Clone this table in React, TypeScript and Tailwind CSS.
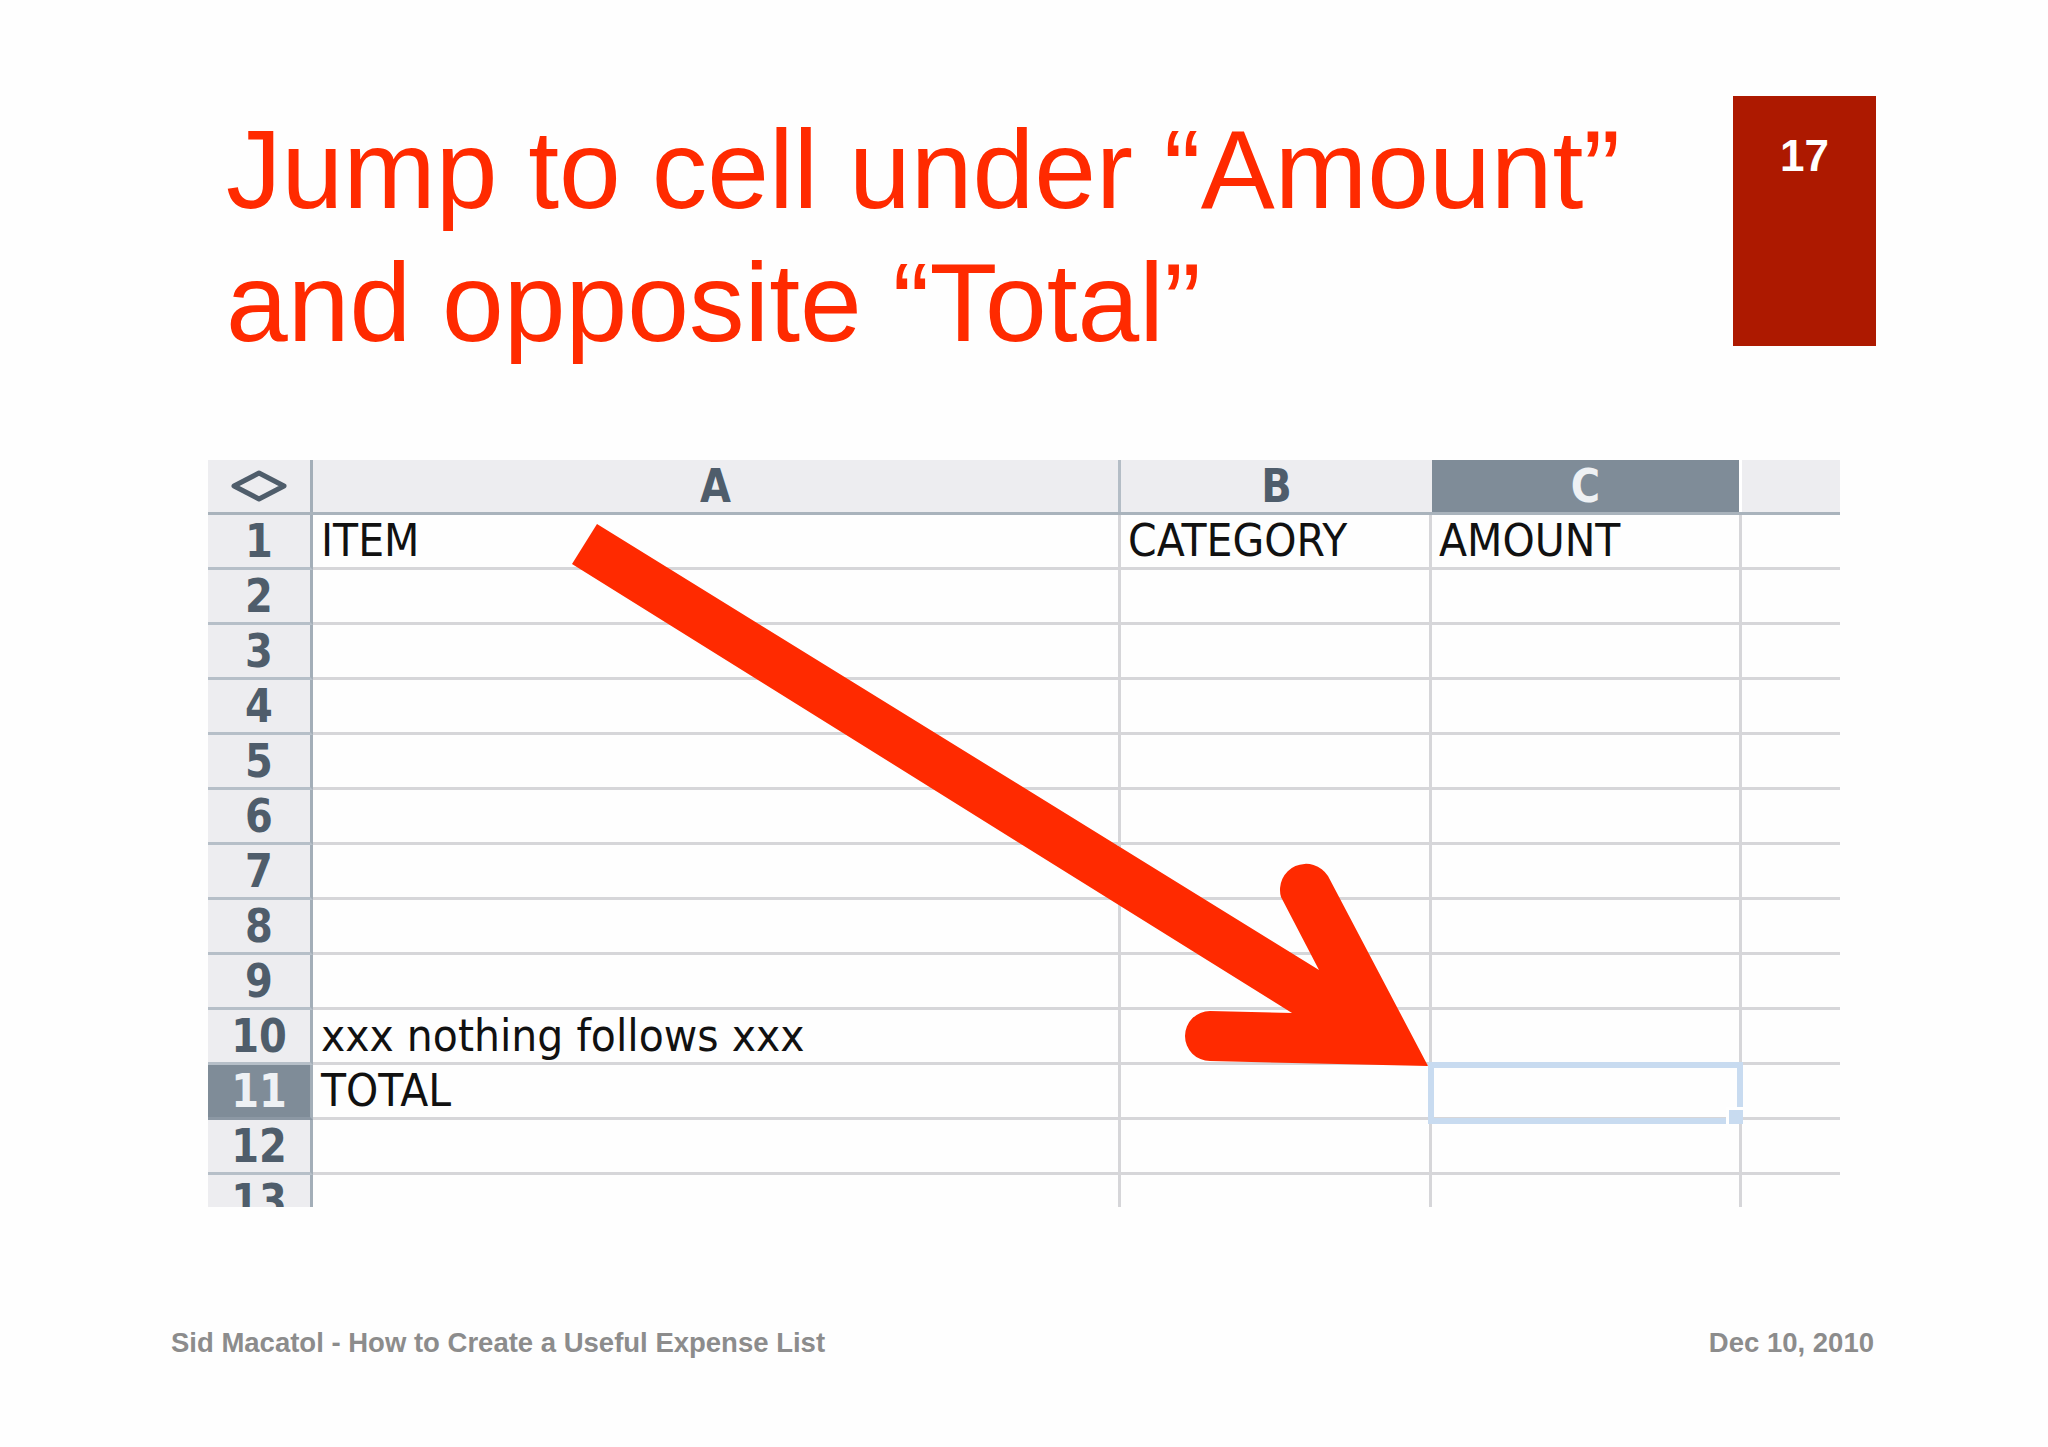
const rows: { n: number; a?: string; b?: string; c?: string; selected?: boolean }[] = [
  { n: 1, a: "ITEM", b: "CATEGORY", c: "AMOUNT" },
  { n: 2 },
  { n: 3 },
  { n: 4 },
  { n: 5 },
  { n: 6 },
  { n: 7 },
  { n: 8 },
  { n: 9 },
  { n: 10, a: "xxx nothing follows xxx" },
  { n: 11, a: "TOTAL", selected: true },
  { n: 12 },
  { n: 13 },
];

const cellText = "inline-block origin-center scale-y-110 font-['DejaVu_Sans',sans-serif] text-[41px] leading-none text-[#111]";
const headText = "inline-block origin-center scale-y-[1.15] font-['DejaVu_Sans',sans-serif] text-[40px] font-bold leading-none";

function HeaderRow() {
  return (
    <div className="flex h-[55px] shrink-0 border-b-[3px] border-[#a9b3bc] bg-[#ededf0]">
      <div className="flex w-[105px] shrink-0 items-center justify-center border-r-[3px] border-[#a3aeb8]">
        <svg width="58" height="34" viewBox="0 0 58 34">
          <polygon points="4,17 29,4 54,17 29,30" fill="none" stroke="#4f5d6b" strokeWidth="5" strokeLinejoin="round" />
        </svg>
      </div>
      <div className="flex w-[808px] shrink-0 items-center justify-center border-r-[3px] border-[#b4bdc6]">
        <span className={`${headText} text-[#4f5d6b]`}>A</span>
      </div>
      <div className="flex w-[311px] shrink-0 items-center justify-center">
        <span className={`${headText} text-[#4f5d6b]`}>B</span>
      </div>
      <div className="flex w-[310px] shrink-0 items-center justify-center border-r-[3px] border-white bg-[#7f8c98]">
        <span className={`${headText} text-[#eef1f4]`}>C</span>
      </div>
      <div className="flex-1" />
    </div>
  );
}

function Row({ n, a, b, c, selected }: (typeof rows)[number]) {
  return (
    <div className="flex h-[55px] shrink-0">
      <div
        className={`flex w-[105px] shrink-0 items-center justify-center border-r-[3px] border-b-[3px] border-r-[#a3aeb8] ${
          selected ? "border-b-[#8c98a4] bg-[#7f8c98] text-[#eef1f4]" : "border-b-[#b6bfc8] bg-[#ededf0] text-[#4f5d6b]"
        }`}
      >
        <span className={headText}>{n}</span>
      </div>
      <div className="flex w-[808px] shrink-0 items-center border-r-[3px] border-b-[3px] border-[#d6d6d9] pl-[8px]">
        {a && <span className={`${cellText} whitespace-nowrap`}>{a}</span>}
      </div>
      <div className="flex w-[311px] shrink-0 items-center border-r-[3px] border-b-[3px] border-[#d6d6d9] pl-[7px]">
        {b && <span className={cellText}>{b}</span>}
      </div>
      <div className="flex w-[310px] shrink-0 items-center border-r-[3px] border-b-[3px] border-[#d6d6d9] pl-[7px]">
        {c && <span className={cellText}>{c}</span>}
      </div>
      <div className="flex-1 border-b-[3px] border-[#d6d6d9]" />
    </div>
  );
}

export default function App() {
  return (
    <div className="relative h-[1447px] w-[2048px] overflow-hidden bg-[#fefefe] font-['Liberation_Sans',Arial,sans-serif]">
      {/* title + slide number */}
      <div className="flex pl-[226px] pt-[96px]">
        <h1 className="mt-[8px] w-[1507px] text-[111px] leading-[133px] font-normal text-[#ff2a00]">
          Jump to cell under “Amount”
          <br />
          and opposite “Total”
        </h1>
        <div className="h-[250px] w-[143px] bg-[#ad1900] pt-[38px] text-center text-[44px] leading-none font-bold text-white">
          17
        </div>
      </div>

      {/* spreadsheet */}
      <div className="relative mt-[90px] ml-[208px] flex h-[747px] w-[1632px] flex-col overflow-hidden">
        <HeaderRow />
        {rows.map((r) => (
          <Row key={r.n} {...r} />
        ))}
        <div className="absolute left-[1220px] top-[602px] h-[62px] w-[315px] border-[6px] border-[#c8dbf0]">
          <div className="absolute -right-[6px] -bottom-[6px] h-[17px] w-[17px] border-t-[3px] border-l-[3px] border-white bg-[#c8dbf0]" />
        </div>
      </div>

      {/* footer */}
      <div className="mt-[122px] flex justify-between pr-[174px] pl-[171px] text-[27.5px] leading-none font-bold text-[#8c8c8c]">
        <span>Sid Macatol - How to Create a Useful Expense List</span>
        <span>Dec 10, 2010</span>
      </div>

      {/* arrow overlay */}
      <svg className="pointer-events-none absolute inset-0" width="2048" height="1447" viewBox="0 0 2048 1447">
        <path
          d="M597 524 L1319 970 L1281 897 A26 26 0 0 1 1328 876 L1428 1066 L1210 1061 A25 25 0 0 1 1210 1011 L1292 1013 L572 564 Z"
          fill="#ff2a00"
        />
      </svg>
    </div>
  );
}
